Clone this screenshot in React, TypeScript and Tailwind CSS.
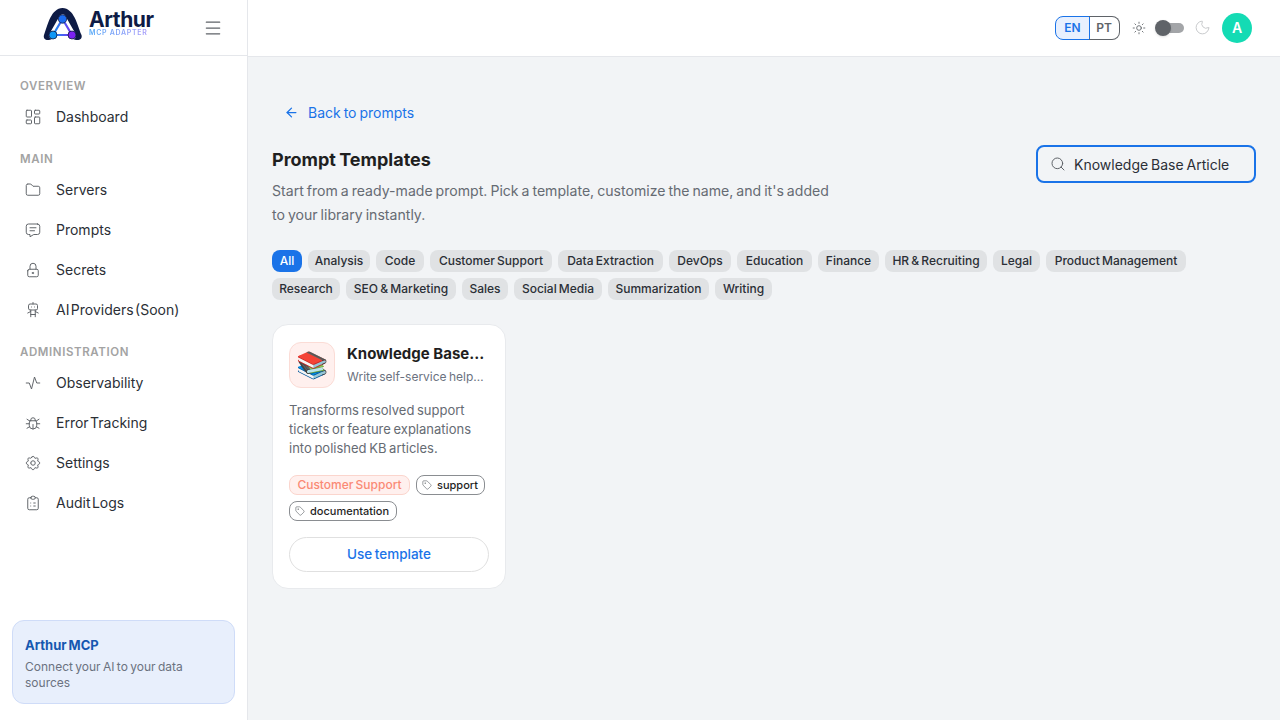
import { ArrowLeft, LayoutDashboard, Menu, Moon, Search, Sun, Tag } from 'lucide-react'
import {
  TbActivity,
  TbBug,
  TbClipboardList,
  TbFolder,
  TbLock,
  TbMessage,
  TbRobot,
  TbSettings,
} from 'react-icons/tb'

const NAV = [
  { title: 'OVERVIEW', items: [{ label: 'Dashboard', icon: LayoutDashboard }] },
  {
    title: 'MAIN',
    items: [
      { label: 'Servers', icon: TbFolder },
      { label: 'Prompts', icon: TbMessage },
      { label: 'Secrets', icon: TbLock },
      { label: 'AI Providers (Soon)', icon: TbRobot },
    ],
  },
  {
    title: 'ADMINISTRATION',
    items: [
      { label: 'Observability', icon: TbActivity },
      { label: 'Error Tracking', icon: TbBug },
      { label: 'Settings', icon: TbSettings },
      { label: 'Audit Logs', icon: TbClipboardList },
    ],
  },
]

const CATEGORIES = [
  { label: 'Analysis', width: 'w-[62px]' },
  { label: 'Code', width: 'w-[48px]' },
  { label: 'Customer Support', width: 'w-[122px]' },
  { label: 'Data Extraction', width: 'w-[105px]' },
  { label: 'DevOps', width: 'w-[62px]' },
  { label: 'Education', width: 'w-[75px]' },
  { label: 'Finance', width: 'w-[61px]' },
  { label: 'HR & Recruiting', width: 'w-[102px]' },
  { label: 'Legal', width: 'w-[47px]' },
  { label: 'Product Management', width: 'w-[140px]' },
  { label: 'Research', width: 'w-[68px]' },
  { label: 'SEO & Marketing', width: 'w-[110px]' },
  { label: 'Sales', width: 'w-[46px]' },
  { label: 'Social Media', width: 'w-[88px]' },
  { label: 'Summarization', width: 'w-[101px]' },
  { label: 'Writing', width: 'w-[57px]' },
]

function Logo() {
  return (
    <svg width="40" height="34" viewBox="0 0 40 34" fill="none" aria-hidden>
      <defs>
        <linearGradient id="tri" x1="9" y1="28" x2="30" y2="28" gradientUnits="userSpaceOnUse">
          <stop offset="0" stopColor="#1296f3" />
          <stop offset="1" stopColor="#7c2df0" />
        </linearGradient>
      </defs>
      <path
        d="M1 28C5 17 8 1.500 19.500 1C31 1.500 34 17 38.500 28C39.500 31.500 37 33.500 33 33L26 31H13L6 33C2.500 33.500 0 31.500 1 28Z"
        fill="#0e1b45"
      />
      <path d="M19.500 11L9.500 28.500H29.500Z" fill="#fff" stroke="#fff" strokeWidth="7" strokeLinejoin="round" />
      <path d="M8 33L13 30H26L31 33Z" fill="#fff" />
      <path d="M19.500 12L10 28H29Z" fill="#fff" stroke="url(#tri)" strokeWidth="2.200" strokeLinejoin="round" />
      <circle cx="19.500" cy="12" r="4.200" fill="#1c6cf0" stroke="#0e1b45" strokeWidth="0.800" />
      <circle cx="10" cy="28" r="4" fill="#0f97f5" stroke="#0e1b45" strokeWidth="0.800" />
      <circle cx="29" cy="28" r="4" fill="#7c22f2" stroke="#0e1b45" strokeWidth="0.800" />
    </svg>
  )
}

function Sidebar() {
  return (
    <aside className="w-[248px] h-[720px] shrink-0 flex flex-col bg-white border-r border-[#e5e7eb]">
      <div className="h-[56px] shrink-0 flex items-center border-b border-[#e5e7eb] pl-[43px]">
        <div className="flex items-center mb-[7px]">
          <Logo />
          <div className="ml-[6px] flex flex-col items-start w-[68px]">
            <span className="text-[21px] leading-[18px] font-bold text-[#0e1b45] tracking-[-0.4px]">Arthur</span>
            <span className="text-[7px] leading-[8px] font-semibold tracking-[0.7px] whitespace-nowrap bg-gradient-to-r from-[#4fa8f7] to-[#a79bfa] bg-clip-text text-transparent">
              MCP ADAPTER
            </span>
          </div>
        </div>
        <Menu size={20} strokeWidth={1.500} className="ml-[46px] text-[#5f6368]" />
      </div>

      <nav className="flex flex-col gap-[13px] px-[12px] pt-[21px]">
        {NAV.map((section) => (
          <div key={section.title}>
            <div className="mb-[2px] h-[18px] pl-[8px] text-[11.500px] leading-[18px] font-semibold tracking-[0.6px] text-[#a3a3a3]">
              {section.title}
            </div>
            {section.items.map(({ label, icon: Icon }) => (
              <div key={label} className="h-[40px] pb-[1px] flex items-center gap-[14px] pl-[12px]">
                <Icon size={18} strokeWidth={1.300} className="shrink-0 text-[#5f6368]" />
                <span className="text-[14px] text-[#2b2f36] [word-spacing:-2.500px]">{label}</span>
              </div>
            ))}
          </div>
        ))}
      </nav>

      <div className="mt-auto mx-[12px] mb-[16px] h-[84px] rounded-[12px] border border-[#cfdcf8] bg-[#e8effc] px-[12px] pt-[14px]">
        <div className="text-[13px] leading-[20px] font-bold text-[#1557b0] [word-spacing:-1px]">Arthur MCP</div>
        <div className="mt-[4px] text-[12px] leading-[16px] text-[#6b7280] [word-spacing:-1px]">
          Connect your AI to your data sources
        </div>
      </div>
    </aside>
  )
}

function Header() {
  return (
    <header className="h-[57px] shrink-0 flex items-center justify-end bg-white border-b border-[#e5e7eb] pr-[28px] pb-[1px]">
      <div className="flex h-[24px] text-[12px] font-semibold">
        <span className="w-[35px] flex items-center justify-center rounded-l-[8px] border border-[#1a73e8] bg-[#e8f0fe] text-[#1a73e8]">
          EN
        </span>
        <span className="w-[31px] -ml-px flex items-center justify-center rounded-r-[8px] border border-l-0 border-[#5f6368] text-[#5f6368]">
          PT
        </span>
      </div>
      <Sun size={14} strokeWidth={1.500} className="ml-[12px] text-[#5f6368]" />
      <div className="relative w-[21px] h-[10px] rounded-full bg-[#a3a5a8] ml-[17px]">
        <div className="absolute -left-[8px] -top-[3px] w-[16px] h-[16px] rounded-full bg-[#5f6368] shadow-sm" />
      </div>
      <Moon size={17} strokeWidth={1.300} className="ml-[10px] text-[#c4c6c9]" />
      <div className="ml-[11px] w-[30px] h-[30px] rounded-full bg-[#14dbb4] flex items-center justify-center text-white text-[14px] font-semibold">
        A
      </div>
    </header>
  )
}

function TemplateCard() {
  return (
    <div className="w-[234px] h-[265px] rounded-[16px] border border-[#e8eaed] bg-white p-[16px]">
      <div className="flex items-start gap-[12px]">
        <div className="mt-[1px] w-[46px] h-[46px] shrink-0 rounded-[12px] border border-[#fbdcd6] bg-[#fff0ee] flex items-center justify-center text-[26px] leading-none">
          📚
        </div>
        <div className="min-w-0 flex-1 mt-[2px]">
          <div className="truncate text-[15px] leading-[22px] font-bold text-[#1f1f1f] pr-[3px]">Knowledge Base Article</div>
          <div className="truncate mt-[3px] text-[12px] leading-[18px] text-[#6b7280] [word-spacing:-1px] pr-[3px]">
            Write self-service help articles
          </div>
        </div>
      </div>
      <p className="mt-[13px] text-[13px] leading-[19px] text-[#666b73] [word-spacing:-1px]">
        Transforms resolved support tickets or feature explanations into polished KB articles.
      </p>
      <div className="mt-[17px] flex flex-wrap gap-[6px] w-[200px]">
        <span className="w-[121px] h-[20px] flex items-center justify-center whitespace-nowrap rounded-[8px] border border-[#fbd5cd] bg-[#fff0ee] text-[12px] font-medium text-[#fa8a75] [word-spacing:-1px]">
          Customer Support
        </span>
        <span className="w-[69px] h-[20px] pl-[5px] flex items-center gap-[5px] rounded-[8px] border border-[#8a8d91] text-[11px] font-medium text-[#1f1f1f]">
          <Tag size={10} strokeWidth={1.500} className="text-[#5f6368]" />
          support
        </span>
        <span className="w-[108px] h-[20px] pl-[5px] flex items-center gap-[5px] rounded-[8px] border border-[#8a8d91] text-[11px] font-medium text-[#1f1f1f]">
          <Tag size={10} strokeWidth={1.500} className="text-[#5f6368]" />
          documentation
        </span>
      </div>
      <button className="mt-[16px] w-[200px] h-[35px] rounded-full border border-[#e0e0e0] bg-white text-[13.500px] font-medium text-[#1a73e8] [word-spacing:-1px]">
        Use template
      </button>
    </div>
  )
}

export default function App() {
  return (
    <div className="flex w-[1280px] h-[720px] overflow-hidden bg-[#f2f4f6] font-['Inter',sans-serif]">
      <Sidebar />
      <div className="flex-1 min-w-0 flex flex-col">
        <Header />
        <main className="px-[24px] pt-[43px]">
          <div className="flex items-center gap-[9px] h-[24px] pl-[12px] text-[14px] text-[#1a73e8] [word-spacing:-1px]">
            <ArrowLeft size={15} strokeWidth={2} />
            Back to prompts
          </div>
          <div className="mt-[22px] flex items-start justify-between">
            <div>
              <h1 className="text-[18px] leading-[28px] font-bold text-[#1f1f1f] [word-spacing:-1px]">Prompt Templates</h1>
              <p className="mt-[5px] w-[570px] text-[14.100px] leading-[24px] text-[#666b73] [word-spacing:-1px]">
                Start from a ready-made prompt. Pick a template, customize the name, and it's added to your library instantly.
              </p>
            </div>
            <div className="-mt-[1px] w-[220px] h-[38px] flex items-center rounded-[8px] border-2 border-[#1a73e8] pl-[12px]">
              <Search size={16} strokeWidth={1.500} className="text-[#5f6368]" />
              <span className="ml-[8px] text-[14px] text-[#2b2f36] whitespace-nowrap [word-spacing:-1px]">Knowledge Base Article</span>
            </div>
          </div>
          <div className="mt-[23px] flex flex-wrap gap-[6px]">
            <span className="w-[30px] h-[22px] flex items-center justify-center rounded-[8px] bg-[#1a73e8] text-[12px] font-medium text-white">
              All
            </span>
            {CATEGORIES.map((c) => (
              <span
                key={c.label}
                className={`${c.width} h-[22px] flex items-center justify-center whitespace-nowrap rounded-[8px] bg-[#e0e2e4] text-[12px] font-medium text-[#2b2f36] [word-spacing:-1px]`}
              >
                {c.label}
              </span>
            ))}
          </div>
          <div className="mt-[24px]">
            <TemplateCard />
          </div>
        </main>
      </div>
    </div>
  )
}
